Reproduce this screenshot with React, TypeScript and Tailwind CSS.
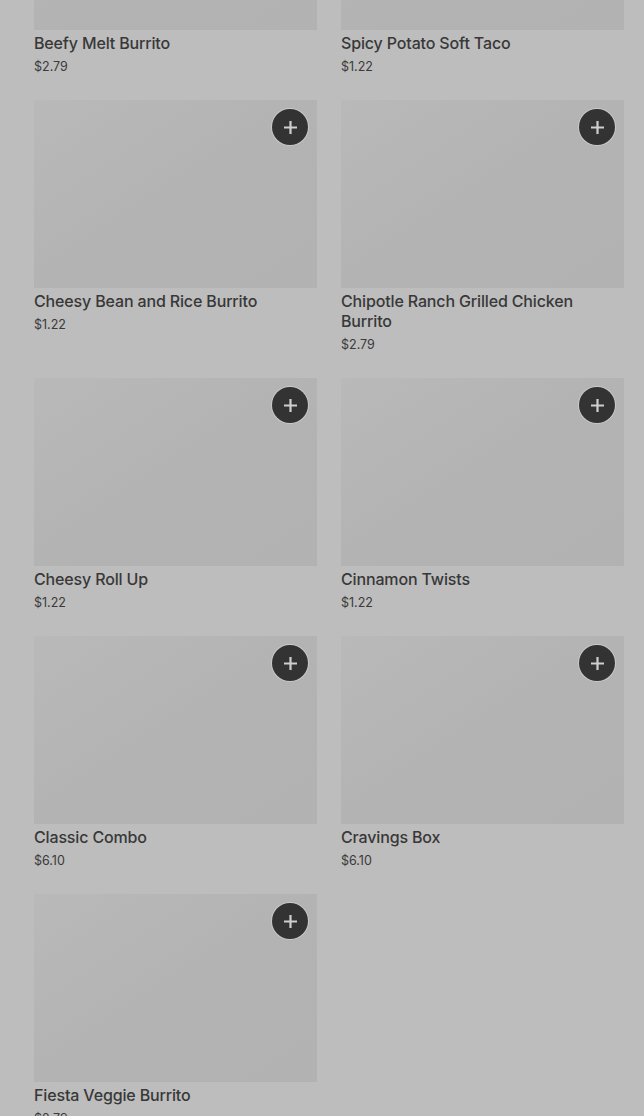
import React from 'react';

interface MenuItem {
  name: string;
  price: string;
}

const items: MenuItem[] = [
  { name: 'Beefy Melt Burrito', price: '$2.79' },
  { name: 'Spicy Potato Soft Taco', price: '$1.22' },
  { name: 'Cheesy Bean and Rice Burrito', price: '$1.22' },
  { name: 'Chipotle Ranch Grilled Chicken Burrito', price: '$2.79' },
  { name: 'Cheesy Roll Up', price: '$1.22' },
  { name: 'Cinnamon Twists', price: '$1.22' },
  { name: 'Classic Combo', price: '$6.10' },
  { name: 'Cravings Box', price: '$6.10' },
  { name: 'Fiesta Veggie Burrito', price: '$2.79' },
];

function PlusButton() {
  return (
    <button className="absolute top-[9px] right-[9px] w-9 h-9 rounded-full bg-[#333333] ring-1 ring-[#c9c9c9] flex items-center justify-center">
      <svg width="13" height="13" viewBox="0 0 13 13">
        <path d="M6.5 1v11M1 6.5h11" stroke="#cfcfcf" strokeWidth="2.2" strokeLinecap="square" />
      </svg>
    </button>
  );
}

function ItemCard({ item, showButton }: { item: MenuItem; showButton: boolean }) {
  return (
    <div className="flex flex-col">
      <div className="relative h-[188px] bg-gradient-to-br from-[#b9b9b9] via-[#b3b3b3] to-[#b2b2b2]">
        {showButton && <PlusButton />}
      </div>
      <h3 className="mt-[3px] text-[16px] leading-5 font-medium tracking-[-0.15px] text-[#383838]">{item.name}</h3>
      <p className="mt-[6px] text-[12.5px] leading-4 text-[#3a3a3a]">{item.price}</p>
    </div>
  );
}

export default function App() {
  return (
    <div
      className="min-h-screen bg-[#bdbdbd] overflow-hidden"
      style={{ fontFamily: 'Inter, "Liberation Sans", sans-serif' }}
    >
      <div className="mt-[-158px] pl-[34px] pr-[20px] grid grid-cols-2 gap-x-6 gap-y-[25px] pb-6">
        {items.map((item, i) => (
          <ItemCard key={item.name} item={item} showButton={i > 1} />
        ))}
      </div>
    </div>
  );
}
